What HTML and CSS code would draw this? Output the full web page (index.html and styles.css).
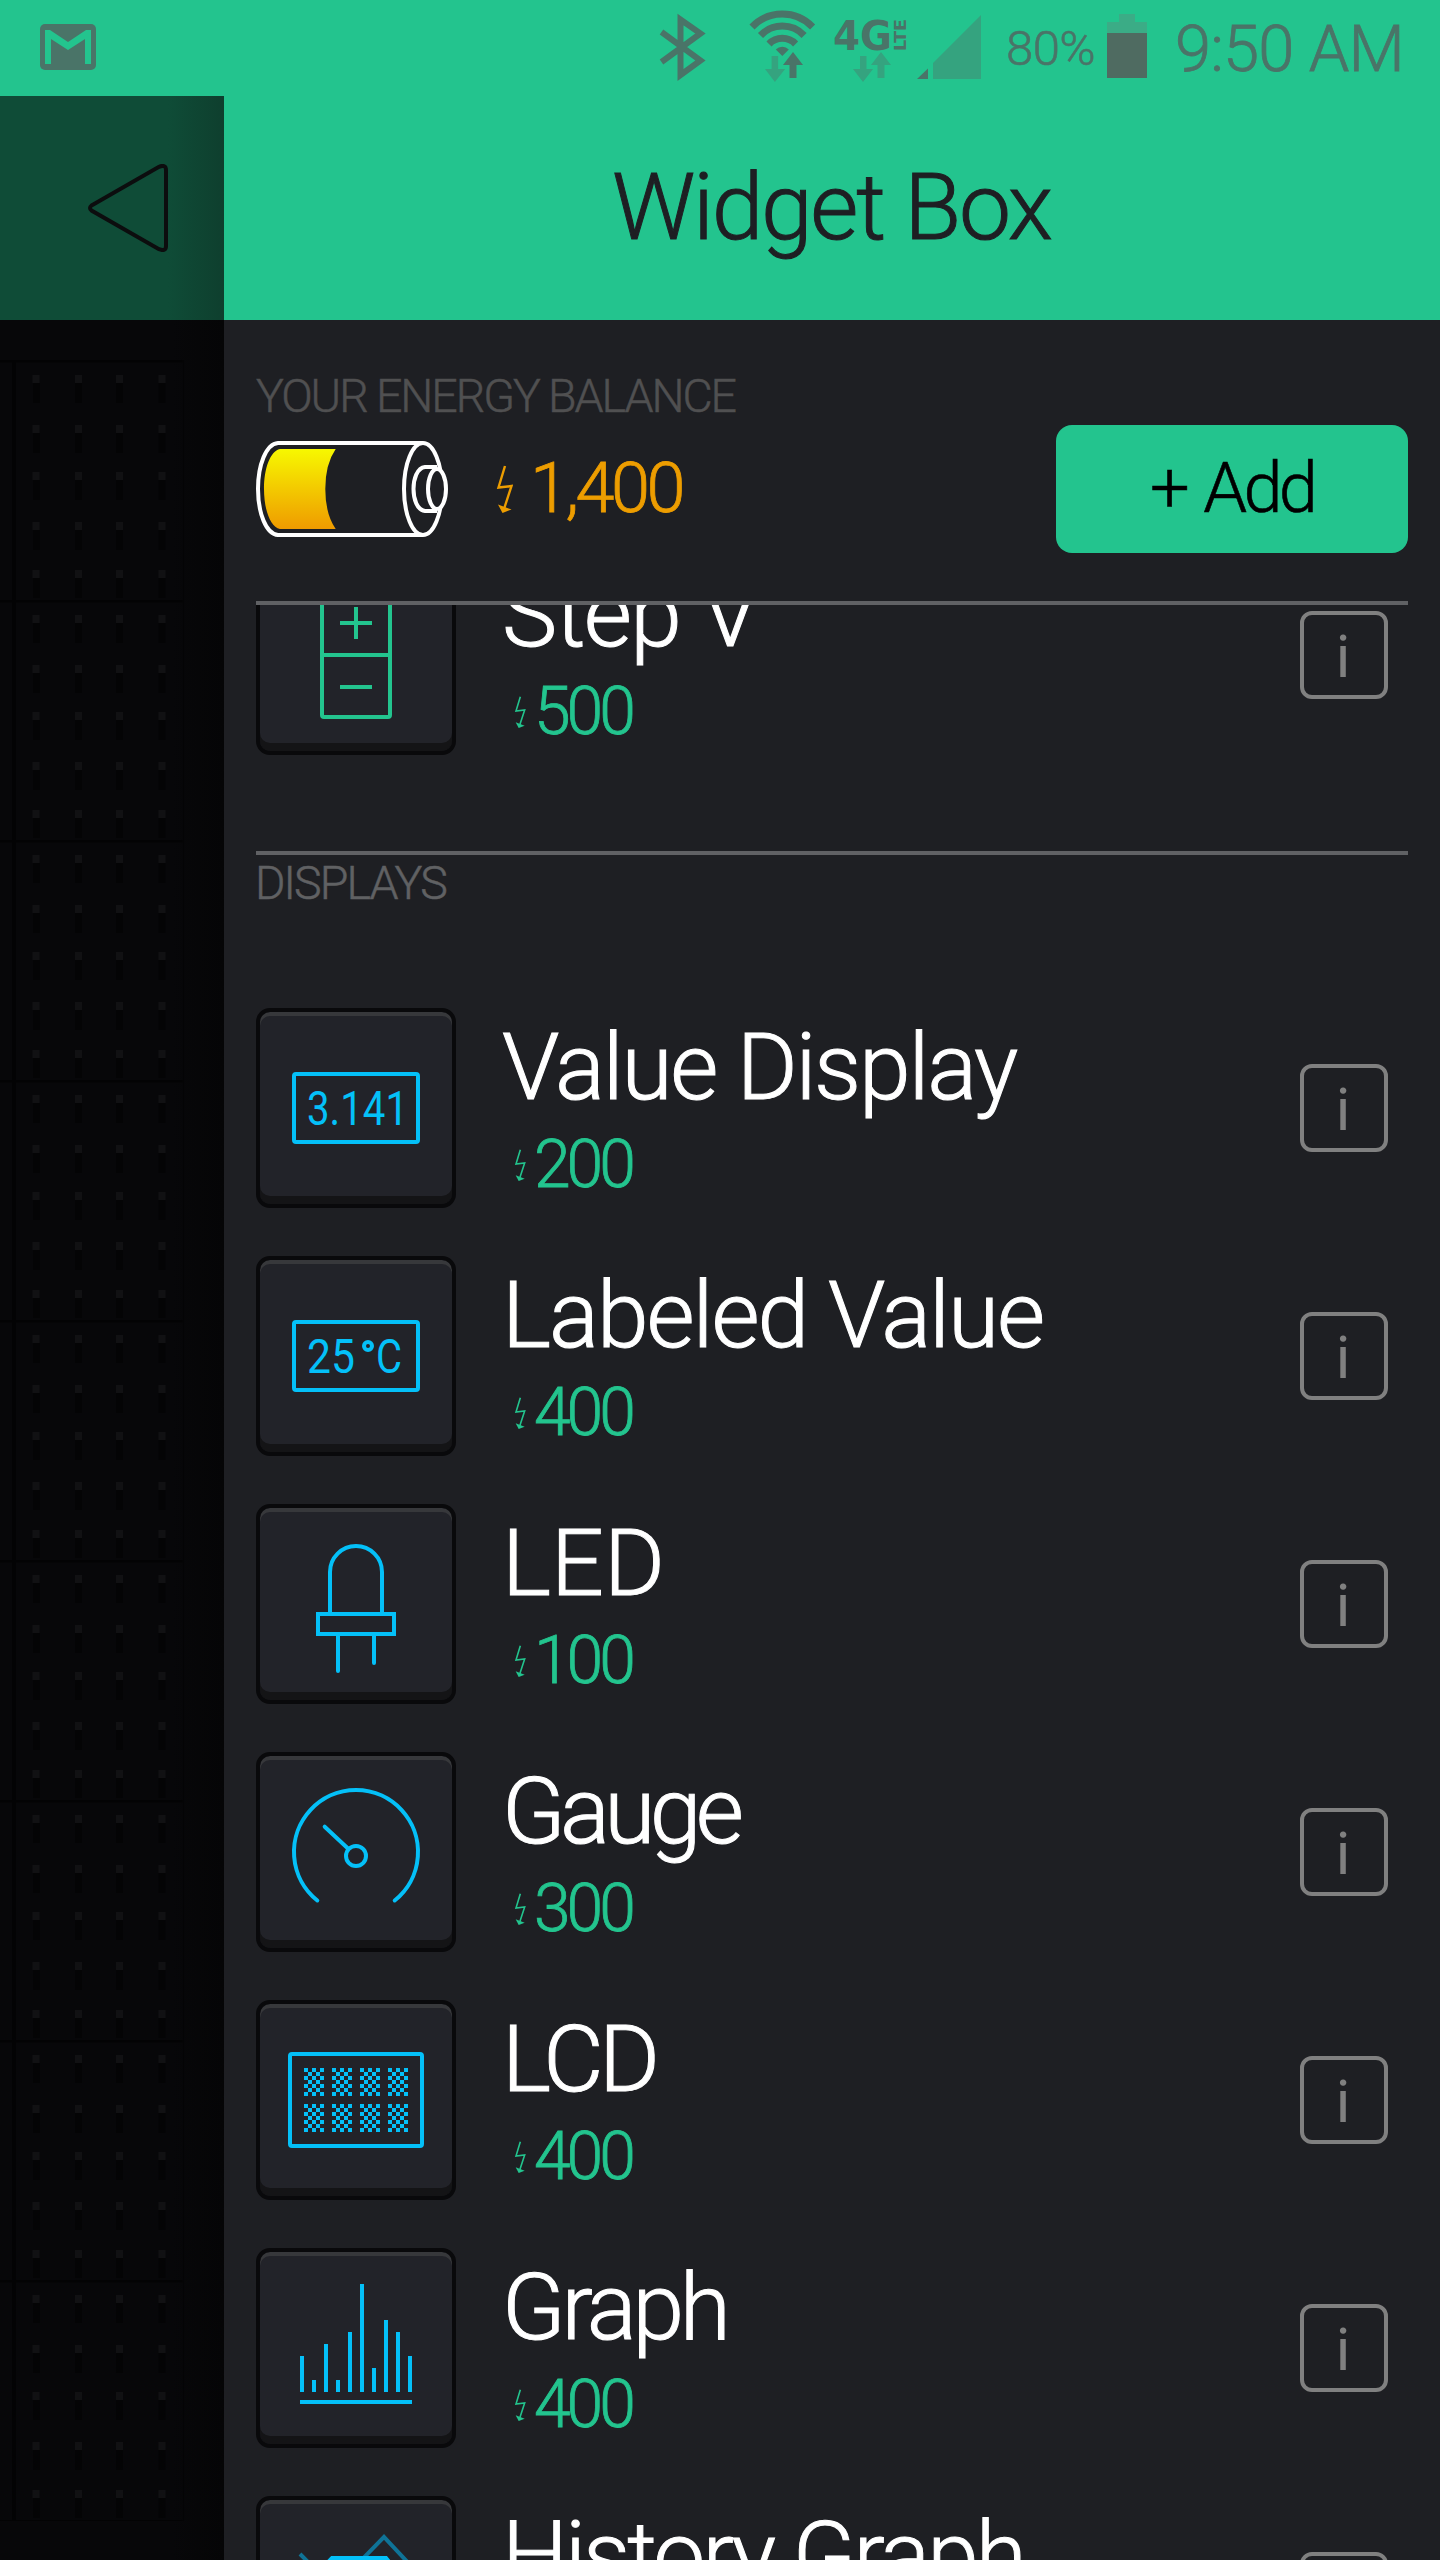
FILE: index.html
```html
<!DOCTYPE html>
<html lang="en">
<head>
<meta charset="utf-8">
<title>Widget Box</title>
<link rel="stylesheet" href="styles.css">
</head>
<body>
<svg class="defs" width="0" height="0">
  <symbol id="bolt" viewBox="0 0 17 48">
    <path d="M9 1 2.500 22.500 15.500 21 8 44" fill="none" stroke="currentColor" stroke-width="2.400"/>
    <path d="M2 39.500 6.500 48 15.500 44.500Z" fill="currentColor"/>
  </symbol>
  <symbol id="lcd-cell" viewBox="0 0 20 28">
    <path d="M0 2h20M0 10h20M0 18h20M0 26h20" stroke="currentColor" stroke-width="4" stroke-dasharray="4 4"/>
    <path d="M4 6h12M4 14h12M4 22h12" stroke="currentColor" stroke-width="4" stroke-dasharray="4 4"/>
  </symbol>
</svg>
<div class="screen">
  <header class="status">
    <svg class="s-mail" width="56" height="47" viewBox="0 0 56 47"><rect width="56" height="46" rx="5" fill="#4a7468"/><path d="M5 6h5l18 12L46 6h5v34h-6V15L28 26 11 15v25H5z" fill="#23c48e"/></svg>
    <svg class="s-bt" width="48" height="68" viewBox="658 13 48 68"><path d="M661.500 32 700.500 60.500 680.500 75V19.500l20 14L661.500 62" fill="none" stroke="#4a7468" stroke-width="6"/></svg>
    <svg class="s-wifi" width="72" height="74" viewBox="746 10 72 74">
      <g fill="none" stroke="#4a7468" stroke-width="7"><path d="M752 27a42 42 0 0 1 60.600 0"/><path d="M760.500 35.500a30 30 0 0 1 43.600 0"/><path d="M769 44a18.500 18.500 0 0 1 26.600 0"/></g>
      <path d="M775.800 49.500a9 9 0 0 1 13 0L782.300 56z" fill="#4a7468"/>
      <path d="M771.600 56h6.500v13h7l-10.200 13L765 69h6.600z" fill="#35a37f"/>
      <path d="M789.500 78h7V65h6.500l-10-13-10 13h6.500z" fill="#4a7468"/>
    </svg>
    <svg class="s-4g" width="76" height="74" viewBox="832 10 76 74">
      <text class="g4" x="833" y="50" textLength="59" lengthAdjust="spacingAndGlyphs">4G</text>
      <text class="lte" transform="translate(906 51) rotate(-90)" textLength="32" lengthAdjust="spacingAndGlyphs">LTE</text>
      <path d="M860 56h6.500v13h6.500l-10 13-10-13h7zM877.500 78h7V65h6.500l-10-13-10 13h6.500z" fill="#35a37f"/>
    </svg>
    <svg class="s-sig" width="66" height="66" viewBox="916 14 66 66"><path d="M933 63 981 15v64h-48z" fill="#35a37f"/><path d="M917 79l11-10.500V79z" fill="#4a7468"/></svg>
    <span class="s-pct">80%</span>
    <svg class="s-bat" width="40" height="64" viewBox="0 0 40 64"><path d="M12 0h16v8h12v11H0V8h12z" fill="#3bac86"/><path d="M0 19h40v45H0z" fill="#4f6b61"/></svg>
    <span class="s-time">9:50 AM</span>
  </header>
  <div class="body">
    <aside class="behind">
      <div class="behind-bar">
        <svg width="80" height="88" viewBox="88 164 80 88"><path d="M91.500 205.500 159 166.800Q166 164 166 170V246Q166 252 159 249.200L91.500 210.500Q88.500 208 91.500 205.500z" fill="none" stroke="#0c0d0e" stroke-width="4"/></svg>
      </div>
      <svg class="grid" width="224" height="2240">
        <defs>
          <pattern id="dots" x="0" y="40" width="190" height="240" patternUnits="userSpaceOnUse">
            <path d="M0 1h12M16 1h168" stroke="#030304" stroke-width="3"/>
            <path d="M14 0v240" stroke="#030304" stroke-width="4"/>
            <path d="M183.500 0v240" stroke="#040405" stroke-width="1.500"/>
            <g stroke="#040405" stroke-width="7" stroke-dasharray="20 30 20 27 20 30 20 28 20 25"><path d="M36.500 23v215M78.500 23v215M119.500 23v215M162 23v215"/></g>
            <g stroke="#111113" stroke-width="7" stroke-dasharray="8 42 8 39 8 42 8 40 8 37"><path d="M36 15v215M78.500 15v215M119.500 15v215M162 15v215"/></g>
          </pattern>
        </defs>
        <rect y="40" width="190" height="2161" fill="url(#dots)"/>
      </svg>
    </aside>
    <main class="panel">
      <h1 class="title">Widget Box</h1>
      <section class="balance">
        <div class="label energy">YOUR ENERGY BALANCE</div>
        <div class="balance-row">
          <svg width="192" height="96" viewBox="0 0 192 96">
            <defs><linearGradient id="charge" x1="0" y1="0" x2="0" y2="1"><stop offset="0" stop-color="#f7f800"/><stop offset="1" stop-color="#ef9b00"/></linearGradient></defs>
            <path d="M24 8H79.700Q69.300 23 69.300 48T79.700 88H24C14 86 8 68 8 48S14 10 24 8z" fill="url(#charge)"/>
            <g fill="none" stroke="#fff" stroke-width="4">
              <path d="M167 2H22C10 3 2 24 2 48S10 93 22 94H167"/>
              <ellipse cx="167" cy="48" rx="19" ry="46"/>
              <path d="M181 26H169C161 27 157.500 38 157.500 48S161 69 169 70H181" fill="#1e1f23"/>
              <ellipse cx="181" cy="48" rx="9" ry="20" fill="#1e1f23"/>
            </g>
          </svg>
          <svg class="bolt-lg"><use href="#bolt"/></svg>
          <span class="amount">1,400</span>
          <button class="add">+ Add</button>
        </div>
      </section>
      <div class="list">
        <div class="row first">
          <div class="tile green"><svg viewBox="0 0 200 200"><rect x="66" y="38" width="68" height="124" rx="2"/><path d="M66 100h68M84 68h32M100 52v32M84 132h32"/></svg></div>
          <div class="info"><div class="name t-step">Step V</div><div class="price"><svg class="bolt"><use href="#bolt"/></svg>500</div></div>
          <span class="more">i</span>
        </div>
        <div class="label section">DISPLAYS</div>
        <div class="row">
          <div class="tile"><svg viewBox="0 0 200 200"><rect x="38" y="66" width="124" height="68" rx="2"/><text x="51" y="116.500" textLength="101" lengthAdjust="spacingAndGlyphs">3.141</text></svg></div>
          <div class="info"><div class="name t-value">Value Display</div><div class="price"><svg class="bolt"><use href="#bolt"/></svg>200</div></div>
          <span class="more">i</span>
        </div>
        <div class="row">
          <div class="tile"><svg viewBox="0 0 200 200"><rect x="38" y="66" width="124" height="68" rx="2"/><text x="51" y="116.500" textLength="48" lengthAdjust="spacingAndGlyphs">25</text><circle cx="112" cy="90" r="4"/><text x="120" y="116.500" textLength="26" lengthAdjust="spacingAndGlyphs">C</text></svg></div>
          <div class="info"><div class="name t-labeled">Labeled Value</div><div class="price"><svg class="bolt"><use href="#bolt"/></svg>400</div></div>
          <span class="more">i</span>
        </div>
        <div class="row">
          <div class="tile"><svg viewBox="0 0 200 200"><path d="M74 110V68a26 26 0 0 1 52 0v42M62 110h76v20H62zM82 130v37M118 130v29" stroke-linecap="round"/></svg></div>
          <div class="info"><div class="name">LED</div><div class="price"><svg class="bolt"><use href="#bolt"/></svg>100</div></div>
          <span class="more">i</span>
        </div>
        <div class="row">
          <div class="tile"><svg viewBox="0 0 200 200"><path d="M61.300 148.500a62 62 0 1 1 77.400 0M68.700 74.700 92.500 97" stroke-linecap="round"/><circle cx="100" cy="104" r="10"/></svg></div>
          <div class="info"><div class="name t-gauge">Gauge</div><div class="price"><svg class="bolt"><use href="#bolt"/></svg>300</div></div>
          <span class="more">i</span>
        </div>
        <div class="row">
          <div class="tile"><svg viewBox="0 0 200 200"><rect x="34" y="54" width="132" height="92" rx="2"/>
            <use href="#lcd-cell" x="48" y="68" width="20" height="28"/><use href="#lcd-cell" x="76" y="68" width="20" height="28"/><use href="#lcd-cell" x="104" y="68" width="20" height="28"/><use href="#lcd-cell" x="132" y="68" width="20" height="28"/>
            <use href="#lcd-cell" x="48" y="104" width="20" height="28"/><use href="#lcd-cell" x="76" y="104" width="20" height="28"/><use href="#lcd-cell" x="104" y="104" width="20" height="28"/><use href="#lcd-cell" x="132" y="104" width="20" height="28"/></svg></div>
          <div class="info"><div class="name t-lcd">LCD</div><div class="price"><svg class="bolt"><use href="#bolt"/></svg>400</div></div>
          <span class="more">i</span>
        </div>
        <div class="row">
          <div class="tile"><svg viewBox="0 0 200 200"><path d="M46 144v-36M58 144v-12M70 144V96M82 144v-12M94 144V84M106 144V36M118 144v-24M130 144V72M142 144V84M154 144v-36M44 154h112"/></svg></div>
          <div class="info"><div class="name t-graph">Graph</div><div class="price"><svg class="bolt"><use href="#bolt"/></svg>400</div></div>
          <span class="more">i</span>
        </div>
        <div class="row">
          <div class="tile"><svg viewBox="0 0 200 200"><path d="M44 58 72 86 84 86 128 41 158 73" stroke="#0f7397"/><path d="M44 96 76 62H130L158 96" fill="#222329"/></svg></div>
          <div class="info"><div class="name t-history">History Graph</div></div>
          <span class="more">i</span>
        </div>
      </div>
    </main>
  </div>
</div>
</body>
</html>
```

FILE: styles.css
```css
* { box-sizing: border-box; }

body {
  margin: 0;
  background: #1e1f23;
  font-family: Roboto, "Open Sans", sans-serif;
  font-weight: 300;
}

svg { display: block; flex: none; }

.defs { position: absolute; }

.screen {
  width: 1440px;
  height: 2560px;
  overflow: hidden;
  display: flex;
  flex-direction: column;
}

/* Status bar */
.status {
  flex: none;
  height: 96px;
  background: #23c48e;
  color: #4a7468;
  display: flex;
  align-items: flex-start;
  white-space: nowrap;
}
.s-mail { margin: 24px 0 0 40px; }
.s-bt { margin: 13px 0 0 562px; }
.s-wifi { margin: 10px 0 0 40px; }
.s-4g { margin: 10px 0 0 14px; overflow: visible; }
.s-sig { margin: 14px 0 0 8px; }
.s-pct {
  margin-left: 24px;
  width: 101px;
  font-size: 49px;
  line-height: 97px;
  letter-spacing: -0.500px;
  -webkit-text-stroke: 0.600px;
}
.s-bat { margin-top: 14px; }
.s-time {
  margin-left: 28px;
  font-size: 65px;
  line-height: 99px;
  letter-spacing: -0.800px;
  -webkit-text-stroke: 0.800px;
}
.g4 { font: bold 41px "DejaVu Sans", sans-serif; fill: #4a7468; }
.lte { font: bold 16px "DejaVu Sans", sans-serif; fill: #4a7468; }

.body { flex: 1; display: flex; min-height: 0; }

/* Dimmed project screen behind the drawer */
.behind {
  width: 224px;
  flex: none;
  background: linear-gradient(90deg, #070709 172px, #050506 224px);
}
.behind-bar {
  height: 224px;
  padding: 68px 0 0 88px;
  background: linear-gradient(90deg, #0f4c37 168px, #0e3f2e 224px);
}

/* Drawer */
.panel {
  flex: 1;
  min-width: 0;
  display: flex;
  flex-direction: column;
}
.title {
  margin: 0;
  flex: none;
  height: 224px;
  background: #23c48e;
  color: #1e1f23;
  font-size: 93px;
  font-weight: 300;
  line-height: 224px;
  letter-spacing: -2.300px;
  padding-left: 388px;
  white-space: nowrap;
  -webkit-text-stroke: 1px;
}
.balance {
  flex: none;
  height: 285px;
  margin: 0 32px;
  padding-top: 51px;
  border-bottom: 4px solid #606164;
}
.label {
  font-size: 46.500px;
  line-height: 50px;
  white-space: nowrap;
  -webkit-text-stroke: 0.500px;
}
.energy { color: #505051; letter-spacing: -2.050px; }
.balance-row {
  display: flex;
  align-items: center;
  height: 128px;
  margin-top: 4px;
}
.bolt-lg { width: 17px; height: 48px; margin-left: 48px; color: #ed9d00; }
.amount {
  margin-left: 17px;
  padding-bottom: 2px;
  color: #ed9d00;
  font-size: 70.300px;
  line-height: 125px;
  letter-spacing: -3.500px;
  -webkit-text-stroke: 0.800px;
}
.add {
  margin: 0 0 0 auto;
  width: 352px;
  height: 128px;
  border: 0;
  border-radius: 16px;
  padding: 0 0 2px;
  background: #23c48e;
  color: #000;
  font: 300 70.300px/126px Roboto, sans-serif;
  letter-spacing: -3.800px;
  word-spacing: 4px;
  -webkit-text-stroke: 0.600px;
}

/* Widget list */
.list {
  flex: 1;
  min-height: 0;
  margin: 0 32px;
  overflow: hidden;
}
.section {
  height: 157px;
  margin-top: 48px;
  padding-top: 3px;
  border-top: 4px solid #606164;
  color: #606163;
  letter-spacing: -1.900px;
  text-indent: -1px;
}
.row {
  display: flex;
  align-items: flex-start;
  height: 248px;
}
.first { margin-top: -50px; }

.tile {
  flex: none;
  width: 200px;
  height: 200px;
  border: 4px solid #09090b;
  border-radius: 14px;
  background: #222329;
  box-shadow: inset 0 4px 0 #37383b, inset 0 -8px 0 #141416;
  color: #04c0f8;
}
.green { color: #23c48e; }
.tile svg {
  width: 200px;
  height: 200px;
  margin: -4px;
  fill: none;
  stroke: currentColor;
  stroke-width: 4;
}
.tile text {
  fill: currentColor;
  stroke: none;
  font-size: 49px;
  font-weight: 400;
}

.info { flex: 1; padding: 5px 0 0 46px; }
.name {
  color: #fff;
  font-size: 93px;
  line-height: 110px;
  white-space: nowrap;
  -webkit-text-stroke: 1px;
}
.t-step { letter-spacing: -1.600px; }
.t-value { letter-spacing: -2.200px; }
.t-labeled { letter-spacing: -2px; }
.t-gauge { letter-spacing: -5.600px; }
.t-lcd { letter-spacing: -4.800px; }
.t-graph { letter-spacing: -4.200px; }
.t-history { letter-spacing: -2.900px; }

.price {
  display: flex;
  align-items: flex-start;
  margin-top: -1px;
  color: #23c48e;
  font-size: 66px;
  line-height: 85px;
  letter-spacing: -4px;
  -webkit-text-stroke: 0.800px;
}
.bolt { width: 12px; height: 32px; margin: 27px 8px 0 12px; }

.more {
  flex: none;
  width: 88px;
  height: 88px;
  margin: 56px 20px 0 0;
  padding-right: 2px;
  border: 4px solid #808080;
  border-radius: 12px;
  color: #808080;
  font-size: 60px;
  font-weight: 400;
  line-height: 84px;
  text-align: center;
}
```
